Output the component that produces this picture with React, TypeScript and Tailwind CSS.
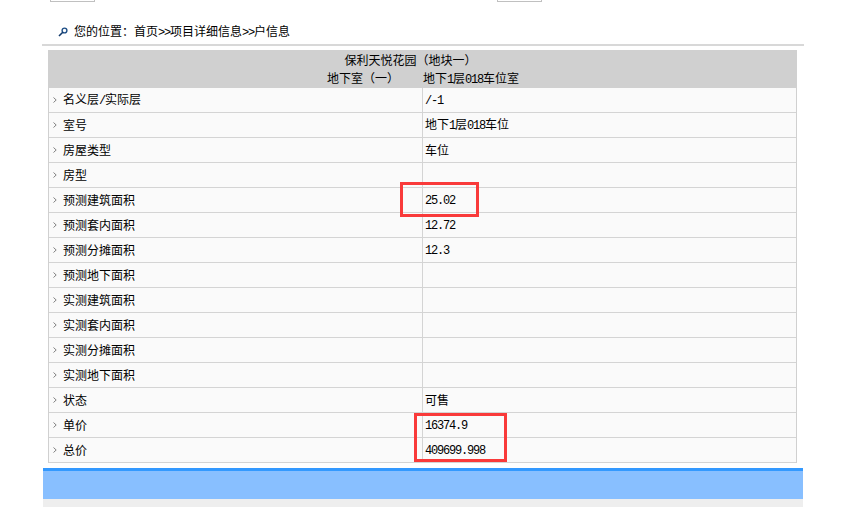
const rows: [string, string][] = [
  ["名义层/实际层", "/-1"],
  ["室号", "地下1层018车位"],
  ["房屋类型", "车位"],
  ["房型", ""],
  ["预测建筑面积", "25.02"],
  ["预测套内面积", "12.72"],
  ["预测分摊面积", "12.3"],
  ["预测地下面积", ""],
  ["实测建筑面积", ""],
  ["实测套内面积", ""],
  ["实测分摊面积", ""],
  ["实测地下面积", ""],
  ["状态", "可售"],
  ["单价", "16374.9"],
  ["总价", "409699.998"],
];

// latin runs are half width next to the CJK, like the old bitmap song face
function Txt({ children }: { children: string }) {
  const parts = children.match(/[\x00-\x7f]+|[^\x00-\x7f]+/g) ?? [];
  return (
    <>
      {parts.map((p, i) =>
        /^[\x00-\x7f]/.test(p) ? (
          <span key={i} className="font-['Liberation_Mono',monospace] text-[12px] tracking-[-1.2px]">{p}</span>
        ) : (
          <span key={i}>{p}</span>
        )
      )}
    </>
  );
}

export default function App() {
  return (
    <div className="relative w-[843px] h-[507px] overflow-hidden bg-white text-black text-[12px] font-['Noto_Sans_CJK_SC',sans-serif]">
      {/* cut off buttons */}
      <div className="flex h-[2px] overflow-hidden">
        <div className="ml-[50px] w-[45px] h-[2px] border border-t-0 border-[#c0c0c0]" />
        <div className="ml-[402px] w-[45px] h-[2px] border border-t-0 border-[#c0c0c0]" />
      </div>

      <div className="mx-[42px] w-[762px]">
        {/* breadcrumb */}
        <div className="flex items-center h-[44px] pt-[17px] pl-[16px] border-b-2 border-[#d8d8d8]">
          <svg width="10" height="10" viewBox="0 0 10 10" className="mr-[6px]">
            <circle cx="6.5" cy="3.5" r="2.4" fill="none" stroke="#1f4f86" strokeWidth="1.4" />
            <path d="M4.8 5.2 L1 9" stroke="#123a6b" strokeWidth="1.6" />
          </svg>
          <span><Txt>您的位置：首页&gt;&gt;项目详细信息&gt;&gt;户信息</Txt></span>
        </div>

        <div className="ml-[6px] mr-[7px] mt-[4px] w-[749px]">
          {/* header */}
          <div className="h-[38px] bg-[#d0d0d0] pt-[1px] leading-[18px]">
            <div className="text-center pr-[24px]">保利天悦花园（地块一）</div>
            <div className="grid grid-cols-[375px_1fr]">
              <div className="text-right pr-[24px]">地下室（一）</div>
              <div><Txt>地下1层018车位室</Txt></div>
            </div>
          </div>

          {/* rows */}
          <div className="border-l border-r border-[#d0d0d0]">
            {rows.map(([k, v]) => (
              <div key={k} className="grid grid-cols-[374px_1fr] h-[25px] bg-[#fafafa] border-b-[1.5px] border-[#d4d4d4]">
                <div className="flex items-center pl-[4px] border-r-[1.5px] border-[#d4d4d4]">
                  <svg width="4" height="6" viewBox="0 0 4 6" className="mr-[6px]">
                    <path d="M0.5 0.5 L3.2 3 L0.5 5.5" fill="none" stroke="#808080" strokeWidth="1" />
                  </svg>
                  <span>{k.includes("/") ? <Txt>{k}</Txt> : k}</span>
                </div>
                <div className="flex items-center pl-[2px]"><span><Txt>{v}</Txt></span></div>
              </div>
            ))}
          </div>
        </div>

        {/* footer bar */}
        <div className="mt-[5px] ml-[1px] w-[760px] h-[31px] bg-[#88bfff] border-t-[3px] border-[#3399ff]" />
        <div className="ml-[1px] w-[760px] h-[8px] bg-[#eeeeee]" />
      </div>

      {/* red annotation boxes */}
      <div className="absolute left-[400px] top-[182px] w-[79px] h-[35px] border-[3px] border-[#f93a3a]" />
      <div className="absolute left-[414px] top-[413px] w-[93px] h-[49px] border-[3px] border-[#f93a3a]" />
    </div>
  );
}
